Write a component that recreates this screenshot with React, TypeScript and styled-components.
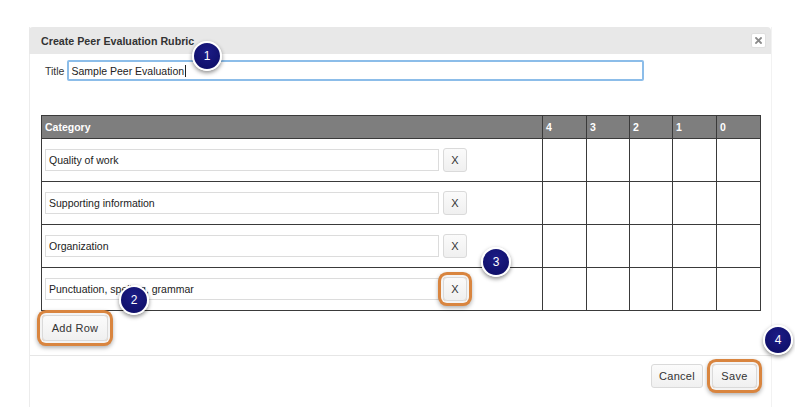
import React from "react";
import styled, { createGlobalStyle, css } from "styled-components";

const GlobalStyle = createGlobalStyle`
  html, body {
    margin: 0;
    padding: 0;
    background: #fff;
    font-family: "Liberation Sans", Arial, Helvetica, sans-serif;
  }
`;

const categories = [
  "Quality of work",
  "Supporting information",
  "Organization",
  "Punctuation, spelling, grammar",
];
const scores = ["4", "3", "2", "1", "0"];
const colWidths = [44, 43, 43, 44, 44];

const Page = styled.div`
  position: relative;
  width: 795px;
  height: 418px;
  padding: 27px 0 0 29px;
  box-sizing: border-box;
  overflow: hidden;
`;

const Dialog = styled.div`
  width: 743px;
  height: 380px;
  border-left: 1px solid #ececec;
  border-right: 1px solid #f2f2f2;
  box-sizing: border-box;
  display: flex;
  flex-direction: column;
`;

const Header = styled.div`
  height: 27px;
  margin-left: -1px;
  background: #e8e8e8;
  border-radius: 4px 4px 0 0;
  display: flex;
  align-items: center;
  justify-content: space-between;
  padding: 0 5px 0 12px;
`;

const HeaderTitle = styled.div`
  font-size: 10.7px;
  font-weight: bold;
  color: #333;
  padding-top: 1px;
`;

const CloseBox = styled.div`
  width: 13px;
  height: 13px;
  background: #fff;
  border: 1px solid #e0e0e0;
  border-radius: 2px;
  display: flex;
  align-items: center;
  justify-content: center;
`;

const Body = styled.div`
  padding: 6px 11px 14px 11px;
  border-bottom: 1px solid #e6e6e6;
`;

const TitleRow = styled.div`
  display: flex;
  align-items: center;
  gap: 3px;
  padding-left: 4px;
`;

const Label = styled.span`
  font-size: 10.5px;
  color: #333;
`;

const TitleField = styled.div`
  width: 571px;
  height: 17px;
  border: 2px solid #8cbde9;
  border-radius: 2px;
  background: #fff;
  display: flex;
  align-items: center;
  padding-left: 2px;
  font-size: 10.5px;
  color: #222;
`;

const Caret = styled.span`
  display: inline-block;
  width: 1px;
  height: 12px;
  background: #222;
  margin-left: 1px;
`;

const Rubric = styled.table`
  margin-top: 34px;
  border-collapse: collapse;
  table-layout: fixed;
  width: 720px;
  border: 1px solid #3a3a3a;
`;

const HeadCell = styled.th<{ $w?: number }>`
  ${(p) => p.$w && css`width: ${p.$w}px;`}
  height: 23px;
  padding: 0 0 0 3px;
  background: #7e7e7e;
  border: 1px solid #3a3a3a;
  color: #fff;
  font-size: 10.5px;
  font-weight: bold;
  text-align: left;
  box-sizing: border-box;
`;

const Cell = styled.td`
  height: 43px;
  padding: 0;
  border: 1px solid #3a3a3a;
  box-sizing: border-box;
`;

const CategoryWrap = styled.div`
  display: flex;
  align-items: center;
  gap: 4px;
  padding-left: 3px;
`;

const CategoryInput = styled.div`
  width: 394px;
  height: 22px;
  box-sizing: border-box;
  border: 1px solid #dcdcdc;
  background: #fff;
  display: flex;
  align-items: center;
  padding-left: 3px;
  font-size: 10.5px;
  color: #222;
`;

const Btn = styled.button<{ $w?: number; $h?: number; $mark?: boolean }>`
  width: ${(p) => p.$w ?? 24}px;
  height: ${(p) => p.$h ?? 24}px;
  padding: 0;
  border: 1px solid #dadada;
  border-radius: 3px;
  background: linear-gradient(#fbfbfb, #f0f0f0);
  color: #333;
  font-family: "Liberation Sans", Arial, sans-serif;
  font-size: 11px;
  letter-spacing: 0.3px;
  cursor: pointer;
  ${(p) =>
    p.$mark &&
    css`
      box-shadow: 0 0 0 2px #f4f4f4, 0 0 0 5px #d9853f,
        0 2px 4px 5px rgba(0, 0, 0, 0.3);
      border-radius: 4px;
    `}
`;

const AddRowWrap = styled.div`
  margin-top: 4px;
  padding-left: 1px;
`;

const Footer = styled.div`
  display: flex;
  justify-content: flex-end;
  gap: 9px;
  padding: 8px 14px 0 0;
`;

const Callout = styled.div<{ $x: number; $y: number }>`
  position: absolute;
  left: ${(p) => p.$x - 15}px;
  top: ${(p) => p.$y - 15}px;
  width: 26px;
  height: 26px;
  border-radius: 50%;
  background: radial-gradient(circle at 50% 35%, #1c1c86, #0c0c62);
  border: 2px solid #fff;
  box-shadow: 0 2px 4px rgba(0, 0, 0, 0.45);
  color: #fff;
  font-size: 12px;
  display: flex;
  align-items: center;
  justify-content: center;
`;

const CloseIcon = () => (
  <svg width="7" height="7" viewBox="0 0 7 7">
    <path d="M1 1 L6 6 M6 1 L1 6" stroke="#8a8a8a" strokeWidth="1.8" strokeLinecap="square" />
  </svg>
);

export default function App() {
  return (
    <Page>
      <GlobalStyle />
      <Dialog>
        <Header>
          <HeaderTitle>Create Peer Evaluation Rubric</HeaderTitle>
          <CloseBox>
            <CloseIcon />
          </CloseBox>
        </Header>
        <Body>
          <TitleRow>
            <Label>Title</Label>
            <TitleField>
              Sample Peer Evaluation
              <Caret />
            </TitleField>
          </TitleRow>
          <Rubric>
            <thead>
              <tr>
                <HeadCell>Category</HeadCell>
                {scores.map((s, i) => (
                  <HeadCell key={s} $w={colWidths[i]}>
                    {s}
                  </HeadCell>
                ))}
              </tr>
            </thead>
            <tbody>
              {categories.map((c, idx) => (
                <tr key={c}>
                  <Cell>
                    <CategoryWrap>
                      <CategoryInput>{c}</CategoryInput>
                      <Btn $mark={idx === 3}>X</Btn>
                    </CategoryWrap>
                  </Cell>
                  {scores.map((s) => (
                    <Cell key={s} />
                  ))}
                </tr>
              ))}
            </tbody>
          </Rubric>
          <AddRowWrap>
            <Btn $w={66} $h={26} $mark>
              Add Row
            </Btn>
          </AddRowWrap>
        </Body>
        <Footer>
          <Btn $w={52}>Cancel</Btn>
          <Btn $w={45} $mark>
            Save
          </Btn>
        </Footer>
      </Dialog>
      <Callout $x={207} $y={56}>1</Callout>
      <Callout $x={134} $y={300}>2</Callout>
      <Callout $x={496} $y={262}>3</Callout>
      <Callout $x={778} $y={340}>4</Callout>
    </Page>
  );
}
